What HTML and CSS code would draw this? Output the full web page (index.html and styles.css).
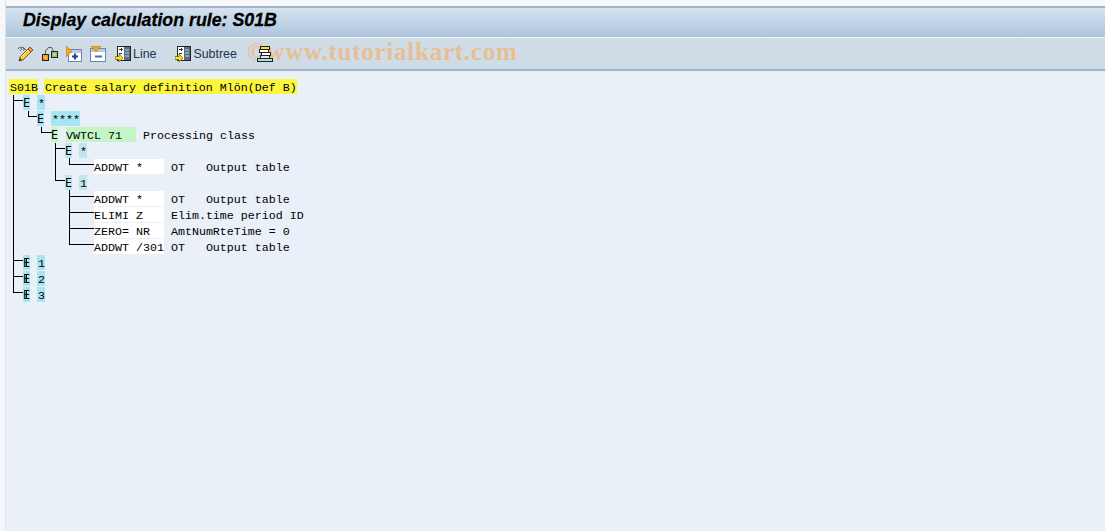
FILE: index.html
```html
<!DOCTYPE html>
<html lang="en">

<head>
    <meta charset="UTF-8">
    <title>Display calculation rule: S01B</title>
    <link rel="stylesheet" href="styles.css">
</head>

<body>

    <div class="wrapper">

        <div class="titleBar">
            <h1>Display calculation rule: S01B</h1>
        </div>

        <div class="toolbar">
            <!-- pencil -->
            <svg class="icon" width="16" height="16" viewBox="0 0 16 16">
                <path d="M0 3c1-2 2-2 3-1s0 3-1 2M3 2c1-1 2-1 3 0s0 3-1 2M5 3c1-1 2 0 3 1" fill="none" stroke="#555" stroke-width="1"/>
                <path d="M1 15l1-4 8-8 2 1 1 2-8 8z" fill="#ffc83c" stroke="#8a5a14" stroke-width="1"/>
                <path d="M10 3l2-2 3 3-2 2z" fill="#f08c6c" stroke="#8a5a14" stroke-width="1"/>
                <path d="M3 11l7-7" stroke="#fff3b0" stroke-width="1"/>
                <path d="M1 15l1-3 2 2z" fill="#333"/>
            </svg>
            <!-- hierarchy -->
            <svg class="icon" width="16" height="16" viewBox="0 0 16 16">
                <path d="M3.500 8V5L6.500 1.500h3L11.500 5" fill="none" stroke="#555" stroke-width="1"/>
                <rect x="0.500" y="8.500" width="6" height="6" fill="#f59a1c" stroke="#222"/>
                <rect x="2.500" y="10.500" width="2" height="2" fill="#ffd27a"/>
                <rect x="9.500" y="5.500" width="6" height="6" fill="#9ac26a" stroke="#222"/>
                <rect x="11.500" y="7.500" width="2" height="2" fill="#d6eab8"/>
            </svg>
            <!-- expand -->
            <svg class="icon" width="16" height="16" viewBox="0 0 16 16">
                <rect x="2.500" y="3.500" width="13" height="12" fill="#fff" stroke="#6d88a8"/>
                <rect x="3" y="4" width="12" height="3" fill="#b9cde2"/>
                <path d="M9 7.500v6M6 10.500h6" stroke="#1a3fa8" stroke-width="2"/>
                <path d="M0 0l6 5.500-6 5.500z" fill="#f5a51e" stroke="#a86a10" stroke-width="0.500"/>
            </svg>
            <!-- collapse -->
            <svg class="icon" width="16" height="16" viewBox="0 0 16 16">
                <rect x="0.500" y="2.500" width="15" height="13" fill="#fff" stroke="#6d88a8"/>
                <rect x="1" y="3" width="14" height="3" fill="#b9cde2"/>
                <path d="M5 10.500h7" stroke="#4a6ea8" stroke-width="2"/>
                <path d="M1 0h10l-5 6z" fill="#f5a51e" stroke="#a86a10" stroke-width="0.500"/>
            </svg>
            <button class="toolBtn first">
                <svg class="icon" width="16" height="16" viewBox="0 0 16 16">
                    <rect x="2.500" y="0.500" width="13" height="14" fill="#fff" stroke="#222"/>
                    <rect x="9" y="1" width="6" height="13" fill="#5a6a80"/>
                    <path d="M10 4h4M10 7h4M10 10h4" stroke="#c8d4e2"/>
                    <path d="M4 3.500h3M6 2l1.500 1.500L6 5M4 7.500h3" fill="none" stroke="#333"/>
                    <path d="M0 10.500h4V8l4 4-4 4v-2.500H0z" fill="#ffe020" stroke="#6a5a00" stroke-width="0.700"/>
                </svg>
                Line
            </button>
            <button class="toolBtn second">
                <svg class="icon" width="16" height="16" viewBox="0 0 16 16">
                    <rect x="2.500" y="0.500" width="13" height="14" fill="#fff" stroke="#222"/>
                    <rect x="9" y="1" width="6" height="13" fill="#5a6a80"/>
                    <path d="M10 4h4M10 7h4M10 10h4" stroke="#c8d4e2"/>
                    <path d="M4 3.500h3M6 2l1.500 1.500L6 5M4 7.500h3" fill="none" stroke="#333"/>
                    <path d="M0 10.500h4V8l4 4-4 4v-2.500H0z" fill="#ffe020" stroke="#6a5a00" stroke-width="0.700"/>
                </svg>
                Subtree
            </button>
            <!-- stack -->
            <svg class="icon stack" width="16" height="16" viewBox="0 0 16 16">
                <rect x="3.500" y="0.500" width="9" height="3" fill="#ffe020" stroke="#222"/>
                <rect x="2.500" y="3.500" width="9" height="3" fill="#fff" stroke="#222"/>
                <rect x="4.500" y="6.500" width="9" height="3" fill="#fff" stroke="#222"/>
                <rect x="3.500" y="9.500" width="9" height="3" fill="#e8e8e8" stroke="#222"/>
                <rect x="0.500" y="12.500" width="15" height="3" fill="#a8e0f0" stroke="#222"/>
            </svg>
            <div class="watermark">©www.tutorialkart.com</div>
        </div>

        <div class="contentWrapper">
            <div class="list">
                <div class="row"><span class="yellow">S01B</span> <span class="yellow">Create salary definition Mlön(Def B)</span></div>
                <div class="row">  <span class="node cyan">E</span> <span class="cyan">*</span></div>
                <div class="row">    <span class="node cyan">E</span> <span class="cyan">****</span></div>
                <div class="row">      <span class="node green">E</span> <span class="green">VWTCL 71  </span> Processing class</div>
                <div class="row">        <span class="node pale">E</span> <span class="pale">*</span></div>
                <div class="row">            <span class="white">ADDWT *   </span> OT   Output table</div>
                <div class="row">        <span class="node pale">E</span> <span class="pale">1</span></div>
                <div class="row">            <span class="white">ADDWT *   </span> OT   Output table</div>
                <div class="row">            <span class="white">ELIMI Z   </span> Elim.time period ID</div>
                <div class="row">            <span class="white">ZERO= NR  </span> AmtNumRteTime = 0</div>
                <div class="row">            <span class="white">ADDWT /301</span> OT   Output table</div>
                <div class="row">  <span class="node cyan closed">E</span> <span class="cyan">1</span></div>
                <div class="row">  <span class="node cyan closed">E</span> <span class="cyan">2</span></div>
                <div class="row">  <span class="node cyan closed">E</span> <span class="cyan">3</span></div>

                <!-- tree lines, on top of the list -->
                <svg class="treeLines" width="100" height="240" viewBox="0 0 100 240">
                    <path d="M3.500 16V214M3 21.500H13M3 181.500H13M3 197.500H13M3 213.500H13
                             M18.500 32V38M18 37.500H27
                             M31.500 48V54M31 53.500H42
                             M45.500 64V102M45 69.500H55M45 101.500H55
                             M59.500 79V86M59 85.500H84
                             M59.500 111V166M59 117.500H84M59 133.500H84M59 149.500H84M59 165.500H84"
                        fill="none" stroke="#000" stroke-width="1"/>
                </svg>
            </div>
        </div>
    </div>

</body>
</html>
```

FILE: styles.css
```css
* {
    box-sizing: border-box;
}

html,
body {
    margin: 0;
    padding: 0;
    height: 100%;
}

body {
    background-color: #f5f7fa;
    overflow: hidden;
}

.wrapper {
    height: 100%;
    margin-left: 5px;
    padding-top: 6px;
    border-left: 1px solid #dde3ea;
    display: flex;
    flex-direction: column;
}

.titleBar {
    height: 32px;
    padding: 1px 0 0 17px;
    border-top: 2px solid #a4b0c6;
    border-bottom: 1px solid #eef3f8;
    background: linear-gradient(#d5e3f0, #adc4dc);
}

.titleBar h1 {
    margin: 0;
    font-family: "Liberation Sans", Arial, sans-serif;
    font-size: 17.8px;
    line-height: 22px;
    font-weight: bold;
    font-style: italic;
    color: black;
    -webkit-text-stroke: 0.3px black;
}

.toolbar {
    position: relative;
    height: 33px;
    padding: 0 0 0 12px;
    display: flex;
    align-items: center;
    gap: 8px;
    background-color: #cfdce6;
    border-bottom: 2px solid #a3b4c8;
}

.icon {
    flex: none;
    display: block;
}

.toolBtn {
    padding: 0;
    border: none;
    background: none;
    display: flex;
    align-items: center;
    gap: 2px;
    font-family: "Liberation Sans", Arial, sans-serif;
    font-size: 12.4px;
    color: #1c3350;
}

.first {
    margin-left: 1px;
}

.second {
    margin-left: 11px;
}

.stack {
    margin-left: 12px;
    position: relative;
    z-index: 1;
}

.watermark {
    position: absolute;
    left: 241px;
    top: -1px;
    font-family: "Liberation Serif", "Times New Roman", serif;
    font-size: 25px;
    font-weight: bold;
    line-height: 30px;
    letter-spacing: 0.75px;
    white-space: nowrap;
    color: #e6bf96;
}

.contentWrapper {
    flex: 1;
    padding: 8px 0 0 4px;
    background-color: #e9f0f8;
}

.list {
    position: relative;
    font-family: "Liberation Mono", "Courier New", monospace;
    font-size: 11.667px;
    color: black;
}

.row {
    height: 16px;
    white-space: pre;
    line-height: 19px;
}

.row span {
    display: inline-block;
    height: 15px;
    vertical-align: top;
}

.row .node {
    margin-right: 1px;
    margin-left: -1px;
    padding: 0;
    font-family: "DejaVu Sans Mono", monospace;
    line-height: 16px;
}

.yellow,
.cyan,
.pale {
    margin-left: -1px;
    padding-left: 1px;
}

.yellow {
    background-color: #fdf63f;
}

.cyan {
    background-color: #a8e4f2;
}

.green {
    background-color: #c4f5c4;
}

.pale {
    background-color: #bde6ee;
}

.white {
    background-color: white;
}

.closed {
    position: relative;
}

.closed::after {
    content: "";
    position: absolute;
    left: 3px;
    top: 3px;
    width: 1px;
    height: 9px;
    background-color: black;
}

.treeLines {
    position: absolute;
    left: 0;
    top: 0;
}
```
